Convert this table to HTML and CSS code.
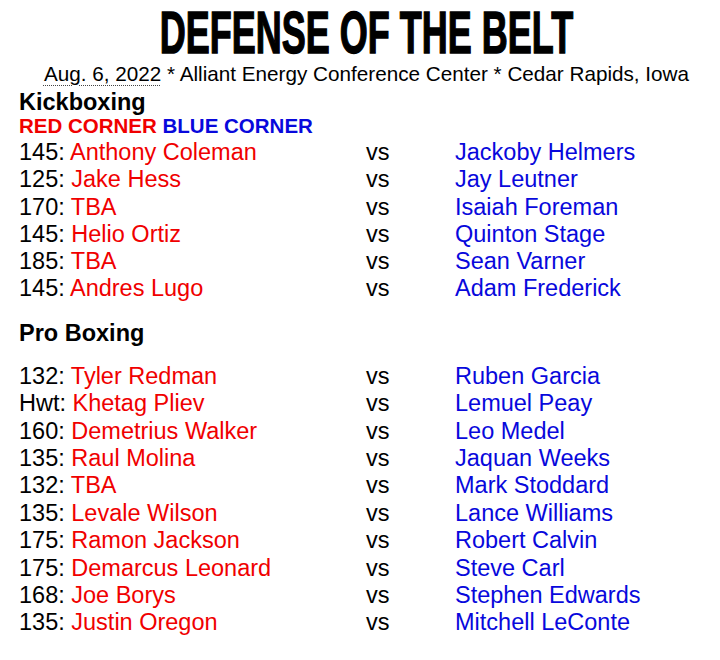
FILE: index.html
```html
<!DOCTYPE html>
<html>
<head>
<meta charset="utf-8">
<link rel="stylesheet" href="styles.css">
</head>
<body>
<div class="page">
  <header class="header">
    <h1 class="title"><span class="title-text">DEFENSE OF THE BELT</span></h1>
    <p class="sub"><span class="dotted">Aug. 6, 2022</span> * Alliant Energy Conference Center * Cedar Rapids, Iowa</p>
  </header>
  <section class="card">
    <h2 class="sec first">Kickboxing</h2>
    <p class="corners"><span class="red">RED CORNER</span> <span class="blue">BLUE CORNER</span></p>
    <div class="bouts">
      <div class="bout"><span>145: <span class="red">Anthony Coleman</span></span><span>vs</span><span class="blue">Jackoby Helmers</span></div>
      <div class="bout"><span>125: <span class="red">Jake Hess</span></span><span>vs</span><span class="blue">Jay Leutner</span></div>
      <div class="bout"><span>170: <span class="red">TBA</span></span><span>vs</span><span class="blue">Isaiah Foreman</span></div>
      <div class="bout"><span>145: <span class="red">Helio Ortiz</span></span><span>vs</span><span class="blue">Quinton Stage</span></div>
      <div class="bout"><span>185: <span class="red">TBA</span></span><span>vs</span><span class="blue">Sean Varner</span></div>
      <div class="bout"><span>145: <span class="red">Andres Lugo</span></span><span>vs</span><span class="blue">Adam Frederick</span></div>
    </div>
    <h2 class="sec pro">Pro Boxing</h2>
    <div class="bouts pro-bouts">
      <div class="bout"><span>132: <span class="red">Tyler Redman</span></span><span>vs</span><span class="blue">Ruben Garcia</span></div>
      <div class="bout"><span>Hwt: <span class="red">Khetag Pliev</span></span><span>vs</span><span class="blue">Lemuel Peay</span></div>
      <div class="bout"><span>160: <span class="red">Demetrius Walker</span></span><span>vs</span><span class="blue">Leo Medel</span></div>
      <div class="bout"><span>135: <span class="red">Raul Molina</span></span><span>vs</span><span class="blue">Jaquan Weeks</span></div>
      <div class="bout"><span>132: <span class="red">TBA</span></span><span>vs</span><span class="blue">Mark Stoddard</span></div>
      <div class="bout"><span>135: <span class="red">Levale Wilson</span></span><span>vs</span><span class="blue">Lance Williams</span></div>
      <div class="bout"><span>175: <span class="red">Ramon Jackson</span></span><span>vs</span><span class="blue">Robert Calvin</span></div>
      <div class="bout"><span>175: <span class="red">Demarcus Leonard</span></span><span>vs</span><span class="blue">Steve Carl</span></div>
      <div class="bout"><span>168: <span class="red">Joe Borys</span></span><span>vs</span><span class="blue">Stephen Edwards</span></div>
      <div class="bout"><span>135: <span class="red">Justin Oregon</span></span><span>vs</span><span class="blue">Mitchell LeConte</span></div>
    </div>
  </section>
</div>
</body>
</html>
```
FILE: styles.css
```css
html, body {
  margin: 0;
  padding: 0;
  background: #ffffff;
}
body {
  font-family: "Liberation Sans", Arial, sans-serif;
  color: #000;
  width: 720px;
  height: 660px;
  overflow: hidden;
}
.page {
  padding-left: 19px;
}
.header {
  margin-left: -6px;
  text-align: center;
}
.title {
  margin: 0;
  height: 62px;
  font-size: 36px;
  line-height: 36px;
  font-weight: 700;
  white-space: nowrap;
}
.title-text {
  display: inline-block;
  transform-origin: 50% 0;
  transform: translateY(3.5px) scaleY(1.64);
  -webkit-text-stroke: 0.9px #000;
}
.sub {
  margin: 0;
  font-size: 20.7px;
  line-height: 24px;
  white-space: nowrap;
}
.dotted {
  text-decoration: underline dotted #444;
  text-decoration-thickness: 1px;
  text-underline-offset: 4px;
}
.sec {
  margin: 0;
  font-size: 23.5px;
  font-weight: 700;
}
.sec.first {
  margin-top: 4px;
  line-height: 25px;
}
.sec.pro {
  margin-top: 17px;
  line-height: 27.25px;
}
.corners {
  margin: 0;
  font-size: 20.5px;
  line-height: 22px;
  font-weight: 700;
}
.red { color: #f00000; }
.blue { color: #0808dc; }
.bouts {
  margin-top: 2px;
  display: flex;
  flex-direction: column;
}
.pro-bouts {
  margin-top: 16px;
}
.bout {
  display: grid;
  grid-template-columns: 347px 89px auto;
  font-size: 23.5px;
  line-height: 27.25px;
  white-space: nowrap;
}
.pro-bouts .bout {
  line-height: 27.4px;
}
```
